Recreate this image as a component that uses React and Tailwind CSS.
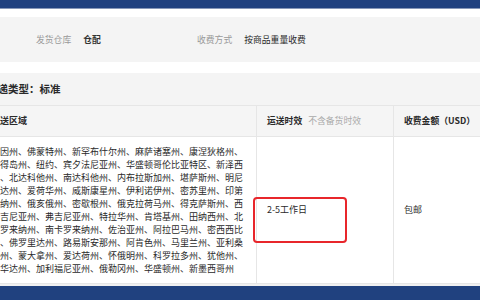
import React from "react";

const lines = [
  "缅因州、佛蒙特州、新罕布什尔州、麻萨诸塞州、康涅狄格州、",
  "罗得岛州、纽约、宾夕法尼亚州、华盛顿哥伦比亚特区、新泽西",
  "州、北达科他州、南达科他州、内布拉斯加州、堪萨斯州、明尼",
  "苏达州、爱荷华州、威斯康星州、伊利诺伊州、密苏里州、印第",
  "安纳州、俄亥俄州、密歇根州、俄克拉荷马州、得克萨斯州、西",
  "弗吉尼亚州、弗吉尼亚州、特拉华州、肯塔基州、田纳西州、北",
  "卡罗来纳州、南卡罗来纳州、佐治亚州、阿拉巴马州、密西西比",
  "州、佛罗里达州、路易斯安那州、阿肯色州、马里兰州、亚利桑",
  "那州、蒙大拿州、爱达荷州、怀俄明州、科罗拉多州、犹他州、",
  "内华达州、加利福尼亚州、俄勒冈州、华盛顿州、新墨西哥州",
];

export default function App() {
  return (
    <div className="relative w-[480px] h-[300px] overflow-hidden bg-white font-['Noto_Sans_CJK_SC',sans-serif] text-[#2a2a2a]">
      <div className="h-[8px] bg-[#20417f]" />
      <div className="h-[1px] bg-[#8797b8]" />
      <div className="h-[8px]" />
      <div className="h-[45px] bg-[#f4f4f4] flex items-center pl-[36px] text-[8.8px]">
        <div className="w-[161px] flex gap-[12px]">
          <span className="text-[#999]">发货仓库</span>
          <span className="font-bold text-[#333]">仓配</span>
        </div>
        <div className="flex gap-[12px]">
          <span className="text-[#999]">收费方式</span>
          <span className="text-[#2a2a2a]">按商品重量收费</span>
        </div>
      </div>
      <div className="h-[11px]" />
      <div className="-ml-[13px] h-[33px] bg-[#f4f4f4] border-b border-[#e6e6e6] flex items-center text-[10.5px] font-bold whitespace-nowrap">
        快递类型：标准
      </div>
      <div className="-ml-[16px] grid grid-cols-[273px_137px_120px]">
        <div className="h-[31px] bg-[#f5f5f5] border-b border-r border-[#e6e6e6] flex items-center pl-[7px] text-[9px] font-bold whitespace-nowrap">
          配送区域
        </div>
        <div className="h-[31px] bg-[#f5f5f5] border-b border-r border-[#e6e6e6] flex items-center pl-[10px] text-[8.8px] whitespace-nowrap">
          <span className="font-bold">运送时效</span>
          <span className="ml-[6px] text-[#aaa]">不含备货时效</span>
        </div>
        <div className="h-[31px] bg-[#f5f5f5] border-b border-[#e6e6e6] flex items-center pl-[10px] text-[8.8px] font-bold whitespace-nowrap">
          收费金额（USD）
        </div>
        <div className="h-[147px] border-r border-b border-[#e6e6e6] flex flex-col justify-center pl-[7px] text-[9px] leading-[13.1px] whitespace-nowrap">
          {lines.map((l, i) => (
            <div key={i}>{l}</div>
          ))}
        </div>
        <div className="h-[147px] border-r border-b border-[#e6e6e6] flex items-center pl-[10px] text-[9px] whitespace-nowrap">
          2-5工作日
        </div>
        <div className="h-[147px] border-b border-[#e6e6e6] flex items-center pl-[10px] text-[9px] whitespace-nowrap">
          包邮
        </div>
      </div>
      <div className="h-[2px] bg-[#f0f0f0]" />
      <div className="h-[20px] bg-[#20417f]" />
      <div className="absolute left-[253px] top-[197px] w-[94px] h-[46px] border-2 border-[#e8262b] rounded-[4px]" />
    </div>
  );
}
